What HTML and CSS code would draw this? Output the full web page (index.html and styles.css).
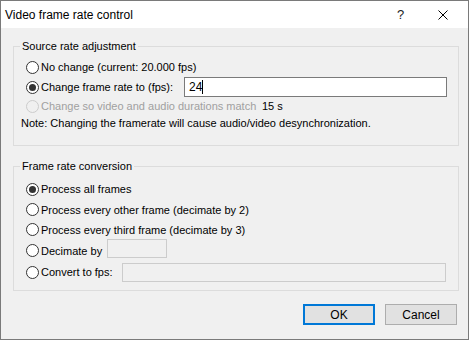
FILE: index.html
```html
<!DOCTYPE html>
<html>
<head>
<meta charset="utf-8">
<link rel="stylesheet" href="styles.css">
</head>
<body>
<div class="window">
  <div class="titlebar">
    <span class="title">Video frame rate control</span>
    <span class="help">?</span>
    <span class="close">
      <svg width="10" height="10" viewBox="0 0 10 10"><path d="M0.5 0.5 L9.5 9.5 M9.5 0.5 L0.5 9.5" stroke="#000" stroke-width="1" fill="none"/></svg>
    </span>
  </div>
  <div class="content">
    <fieldset class="group group-source">
      <legend>Source rate adjustment</legend>
      <div class="row r1">
        <span class="radio"></span><span class="label">No change (current: 20.000 fps)</span>
      </div>
      <div class="row r2">
        <span class="radio checked"></span><span class="label w-fps">Change frame rate to (fps):</span>
        <span class="field field-fps"><span class="val">24</span><span class="caret"></span></span>
      </div>
      <div class="row r3">
        <span class="radio disabled"></span><span class="label disabled-text w-match">Change so video and audio durations match</span>
        <span class="label">15 s</span>
      </div>
      <div class="row note">Note: Changing the framerate will cause audio/video desynchronization.</div>
    </fieldset>
    <fieldset class="group group-conv">
      <legend>Frame rate conversion</legend>
      <div class="row c1"><span class="radio checked"></span><span class="label">Process all frames</span></div>
      <div class="row c2"><span class="radio"></span><span class="label">Process every other frame (decimate by 2)</span></div>
      <div class="row c3"><span class="radio"></span><span class="label">Process every third frame (decimate by 3)</span></div>
      <div class="row c4"><span class="radio"></span><span class="label w-dec">Decimate by</span><span class="field off field-dec"></span></div>
      <div class="row c5"><span class="radio"></span><span class="label w-conv">Convert to fps:</span><span class="field off field-conv"></span></div>
    </fieldset>
    <div class="buttons">
      <button class="btn default">OK</button>
      <button class="btn">Cancel</button>
    </div>
  </div>
</div>
</body>
</html>
```

FILE: styles.css
```css
* { box-sizing: border-box; }
html, body { margin: 0; padding: 0; background: #ffffff; }
body {
  font-family: "Segoe UI", "Liberation Sans", Arial, sans-serif;
  font-size: 11px;
  color: #000;
}
.window {
  width: 469px;
  height: 340px;
  border: 1px solid #7a7a7a;
  background: #f0f0f0;
  display: flex;
  flex-direction: column;
}
.titlebar {
  height: 27px;
  background: #fff;
  display: flex;
  align-items: center;
  padding-left: 4px;
  font-size: 12px;
}
.title { flex: 1; }
.help { width: 10px; margin-right: 31px; font-size: 13px; color: #222; }
.close { width: 10px; height: 10px; margin-right: 20px; display: flex; }
.content {
  flex: 1;
  padding: 11px 10px 0 12px;
  display: flex;
  flex-direction: column;
}
.group {
  margin: 0;
  border: 1px solid #dcdcdc;
  padding: 0 10px 0 12px;
  width: 446px;
}
.group legend {
  padding: 0 2px;
  margin-left: -6px;
  line-height: 14px;
}
.group-source { padding-top: 4px; height: 107px; }
.group-conv { margin-top: 13px; padding-top: 6px; height: 132px; }
.row {
  display: flex;
  align-items: center;
  height: 20px;
}
.r3 { height: 18px; }
.note { height: 16px; padding-left: 0; margin-left: -5px; }
.c2 { height: 21px; }
.c3 { height: 19px; }
.c4 { height: 23px; }
.radio {
  width: 13px;
  height: 13px;
  border: 1px solid #333;
  border-radius: 50%;
  background: #fff;
  margin-right: 2px;
  flex: none;
  display: flex;
  align-items: center;
  justify-content: center;
}
.radio.checked::after {
  content: "";
  width: 7px;
  height: 7px;
  border-radius: 50%;
  background: #333;
}
.radio.disabled { border-color: #cccccc; background: #f0f0f0; }
.disabled-text { color: #a0a0a0; }
.label { white-space: nowrap; }
.w-fps { width: 143px; }
.w-match { width: 221px; }
.w-dec { width: 66px; }
.w-conv { width: 81px; }
.field {
  height: 20px;
  border: 1px solid #7a7a7a;
  background: #fff;
  display: flex;
  align-items: center;
  padding-left: 4px;
}
.field-fps { width: 263px; font-size: 12px; }
.caret { width: 1px; height: 14px; background: #000; margin-left: 0; }
.field.off { background: #f0f0f0; border-color: #cccccc; }
.field-dec { width: 60px; height: 19px; margin-bottom: 5px; }
.field-conv { width: 324px; height: 19px; }
.buttons {
  display: flex;
  justify-content: flex-end;
  gap: 10px;
  margin-top: 13px;
  padding-right: 2px;
  width: 446px;
}
.btn {
  width: 72px;
  height: 21px;
  font: inherit;
  font-size: 12px;
  background: #e1e1e1;
  border: 1px solid #adadad;
  padding: 0;
  color: #000;
}
.btn.default { border: 2px solid #0078d7; }
```
